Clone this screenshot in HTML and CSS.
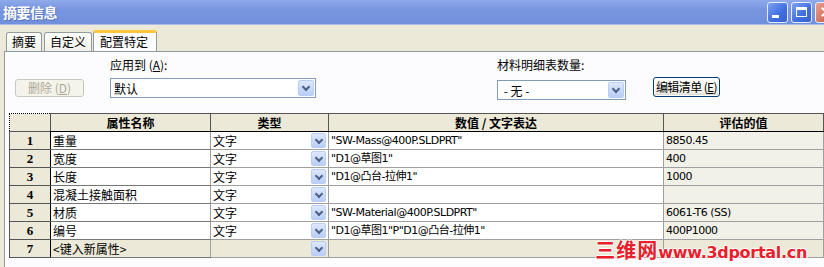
FILE: index.html
```html
<!DOCTYPE html>
<html lang="zh-CN">
<head>
    <meta charset="UTF-8">
    <title>摘要信息</title>
    <link rel="stylesheet" href="styles.css">
</head>
<body>
    <div class="window">
        <div class="titlebar">
            <span class="title">摘要信息</span>
            <div class="caption-buttons">
                <span class="cap-btn"><span class="min-glyph"></span></span>
                <span class="cap-btn"><span class="max-glyph"></span></span>
                <span class="cap-btn close"><span class="close-glyph"></span></span>
            </div>
        </div>

        <div class="tabstrip">
            <span class="tab">摘要</span>
            <span class="tab">自定义</span>
            <span class="tab active">配置特定</span>
        </div>

        <div class="panel">
            <div class="toolbar">
                <div class="group group-delete">
                    <button class="btn" disabled>删除 (<u>D</u>)</button>
                </div>
                <div class="group group-apply">
                    <label>应用到 (<u>A</u>):</label>
                    <div class="combo wide"><span>默认</span><span class="drop"></span></div>
                </div>
                <div class="group group-bom">
                    <label>材料明细表数量:</label>
                    <div class="combo narrow"><span>&nbsp;- 无 -</span><span class="drop"></span></div>
                </div>
                <div class="group group-edit">
                    <button class="btn focus">编辑清单 (<u>E</u>)</button>
                </div>
            </div>

            <table class="grid">
                <colgroup>
                    <col class="c-num">
                    <col class="c-name">
                    <col class="c-type">
                    <col class="c-value">
                    <col class="c-eval">
                </colgroup>
                <thead>
                    <tr>
                        <th class="corner"></th>
                        <th>属性名称</th>
                        <th>类型</th>
                        <th>数值 / 文字表达</th>
                        <th>评估的值</th>
                    </tr>
                </thead>
                <tbody>
                    <tr>
                        <td class="num">1</td>
                        <td class="name">重量</td>
                        <td class="type">文字<span class="drop"></span></td>
                        <td class="val">"SW-Mass@400P.SLDPRT"</td>
                        <td class="eval">8850.45</td>
                    </tr>
                    <tr>
                        <td class="num">2</td>
                        <td class="name">宽度</td>
                        <td class="type">文字<span class="drop"></span></td>
                        <td class="val">"D1@草图1"</td>
                        <td class="eval">400</td>
                    </tr>
                    <tr>
                        <td class="num">3</td>
                        <td class="name">长度</td>
                        <td class="type">文字<span class="drop"></span></td>
                        <td class="val">"D1@凸台-拉伸1"</td>
                        <td class="eval">1000</td>
                    </tr>
                    <tr>
                        <td class="num">4</td>
                        <td class="name">混凝土接触面积</td>
                        <td class="type">文字<span class="drop"></span></td>
                        <td class="val"></td>
                        <td class="eval"></td>
                    </tr>
                    <tr>
                        <td class="num">5</td>
                        <td class="name">材质</td>
                        <td class="type">文字<span class="drop"></span></td>
                        <td class="val">"SW-Material@400P.SLDPRT"</td>
                        <td class="eval">6061-T6 (SS)</td>
                    </tr>
                    <tr>
                        <td class="num">6</td>
                        <td class="name">编号</td>
                        <td class="type">文字<span class="drop"></span></td>
                        <td class="val">"D1@草图1"P"D1@凸台-拉伸1"</td>
                        <td class="eval">400P1000</td>
                    </tr>
                    <tr class="new-row">
                        <td class="num">7</td>
                        <td class="name">&lt;键入新属性&gt;</td>
                        <td class="type"><span class="drop"></span></td>
                        <td class="val"></td>
                        <td class="eval"></td>
                    </tr>
                </tbody>
            </table>

            <div class="watermark"><span class="wm-cn">三维网</span><span class="wm-en">www.3dportal.cn</span></div>
        </div>
    </div>
</body>
</html>
```

FILE: styles.css
```css
* {
    margin: 0;
    padding: 0;
    box-sizing: border-box;
}

body {
    font-family: "Liberation Sans", "Noto Sans CJK SC", sans-serif;
    font-size: 12px;
    color: #000;
    background-color: #ece9d8;
    width: 824px;
    height: 267px;
    overflow: hidden;
}

.window {
    display: flex;
    flex-direction: column;
    height: 267px;
}

/* title bar */
.titlebar {
    height: 25px;
    display: flex;
    align-items: center;
    justify-content: space-between;
    background: linear-gradient(#8eaaea, #7895df 40%, #7190dc);
    border-bottom: 1px solid #a9bde8;
}

.title {
    color: #fff;
    font-family: "Noto Sans CJK SC", sans-serif;
    font-weight: bold;
    font-size: 14px;
    padding-left: 3px;
    text-shadow: 1px 1px 0 #5a72b8;
    letter-spacing: -0.5px;
}

.caption-buttons {
    display: flex;
    gap: 3px;
    margin-right: -12px;
}

.cap-btn {
    width: 21px;
    height: 21px;
    border: 1px solid #e6ecfa;
    border-radius: 3px;
    background: linear-gradient(135deg, #7ea0f0, #3f6ee0 60%, #3a62d0);
    display: flex;
    align-items: center;
    justify-content: center;
    position: relative;
}

.cap-btn.close {
    background: linear-gradient(135deg, #e8a090, #c8543c);
}

.min-glyph {
    width: 7px;
    height: 3px;
    background: #fff;
    margin-top: 9px;
    margin-right: 4px;
}

.max-glyph {
    width: 11px;
    height: 10px;
    border: 1px solid #fff;
    border-top-width: 3px;
}

.close-glyph,
.close-glyph::after {
    width: 12px;
    height: 2px;
    background: #fff;
    transform: rotate(45deg);
}

.close-glyph::after {
    content: "";
    display: block;
    transform: rotate(90deg);
}

/* tabs */
.tabstrip {
    height: 26px;
    display: flex;
    align-items: flex-end;
    padding-left: 6px;
    font-family: "Noto Sans CJK SC", sans-serif;
}

.tab {
    height: 19px;
    padding: 0 5px 0 5px;
    margin-right: 2px;
    border: 1px solid #919b9c;
    border-bottom: none;
    border-radius: 3px 3px 0 0;
    background: linear-gradient(#fefefe, #f0f0ea);
    font-size: 12px;
    line-height: 18px;
}

.tab.active {
    height: 22px;
    padding: 0 8px 0 6px;
    margin-left: -1px;
    margin-bottom: -1px;
    border-top: 3px solid #ffc83c;
    background: #fcfcfe;
    line-height: 18px;
    position: relative;
}

/* tab page */
.panel {
    flex: 1;
    margin-left: 4px;
    background-color: #fcfcfe;
    border-left: 1px solid #919b9c;
    border-top: 1px solid #919b9c;
    position: relative;
}

.toolbar {
    height: 61px;
    display: flex;
    font-family: "Noto Sans CJK SC", sans-serif;
}

.group {
    display: flex;
    flex-direction: column;
}

.group label {
    height: 17px;
    margin-top: 4px;
    margin-bottom: 5px;
    line-height: 17px;
}

.group-delete {
    width: 105px;
    padding-left: 10px;
    padding-top: 27px;
}

.group-apply {
    width: 387px;
}

.group-bom {
    width: 156px;
}

.group-edit {
    padding-top: 25px;
}

.btn {
    font-family: "Noto Sans CJK SC", sans-serif;
    font-size: 12px;
    height: 18px;
    border: 1px solid #c9c7ba;
    border-radius: 3px;
    background: #f5f4ea;
    color: #aca899;
    line-height: 14px;
    white-space: nowrap;
}

.group-delete .btn {
    width: 69px;
}

.btn.focus {
    width: 67px;
    height: 20px;
    padding: 0;
    color: #000;
    letter-spacing: -0.6px;
    border: 1px solid #003c74;
    background: linear-gradient(#ffffff, #f0f0ea 80%, #d6d0c5);
    box-shadow: inset 0 0 0 1px #fff;
}

.combo {
    height: 20px;
    border: 1px solid #7f9db9;
    background: #fff;
    display: flex;
    align-items: center;
    justify-content: space-between;
    padding-left: 3px;
}

.combo.wide {
    width: 206px;
}

.combo.narrow {
    width: 129px;
    margin-top: 2px;
}

.drop {
    width: 16px;
    height: 16px;
    margin-right: 1px;
    border: 1px solid #b9cdf6;
    border-radius: 2px;
    background: linear-gradient(#dde8fe, #b9cdf7);
    position: relative;
}

.drop::after {
    content: "";
    position: absolute;
    left: 4px;
    top: 3px;
    width: 4px;
    height: 4px;
    border-right: 2px solid #4d6185;
    border-bottom: 2px solid #4d6185;
    transform: rotate(45deg);
}

/* property grid */
.grid {
    margin-left: 4px;
    border-collapse: collapse;
    table-layout: fixed;
    width: 814px;
    font-size: 12px;
}

.c-num { width: 41px; }
.c-name { width: 160px; }
.c-type { width: 118px; }
.c-value { width: 335px; }
.c-eval { width: 160px; }

.grid th,
.grid td {
    height: 18px;
    padding: 0 2px;
    border: 1px solid #a0a0a0;
    white-space: nowrap;
    overflow: hidden;
}

.grid th {
    background: #ece9d8;
    font-family: "Noto Sans CJK SC", sans-serif;
    font-weight: bold;
    border-color: #555;
    border-bottom-color: #000;
}

.grid th.corner {
    border: 1px dotted #000;
}

.grid td {
    background: #fff;
    font-family: "Noto Sans CJK SC", sans-serif;
    line-height: 16px;
}

.grid td.num {
    background: #ece9d8;
    text-align: center;
    font-family: "Liberation Serif", serif;
    font-weight: bold;
    font-size: 13px;
    border-color: #555;
    border-right-color: #000;
}

.grid td.name {
    border-bottom-color: #777;
}

.grid td.type {
    position: relative;
    padding-right: 18px;
}

.grid td.type .drop {
    position: absolute;
    right: 1px;
    top: 1px;
    width: 15px;
    height: 15px;
}

.grid td.val,
.grid td.eval {
    font-family: "DejaVu Sans", "Noto Sans CJK SC", sans-serif;
    font-size: 11px;
    letter-spacing: -0.5px;
}

.grid td.eval {
    background: #f2f1e8;
}

.new-row td {
    background: #ece9d8;
}

.new-row td.eval {
    background: #ece9d8;
}

.watermark {
    position: absolute;
    right: 17px;
    bottom: 4px;
    color: #e8202c;
    font-weight: bold;
    text-shadow: 1px 0 0 #fff, -1px 0 0 #fff, 0 1px 0 #fff, 0 -1px 0 #fff;
    display: flex;
    align-items: baseline;
    line-height: 20px;
}

.wm-cn {
    font-family: "Noto Sans CJK SC", sans-serif;
    font-size: 20px;
    letter-spacing: 1px;
}

.wm-en {
    font-family: "DejaVu Sans", sans-serif;
    font-size: 16px;
    letter-spacing: -0.3px;
}
```
